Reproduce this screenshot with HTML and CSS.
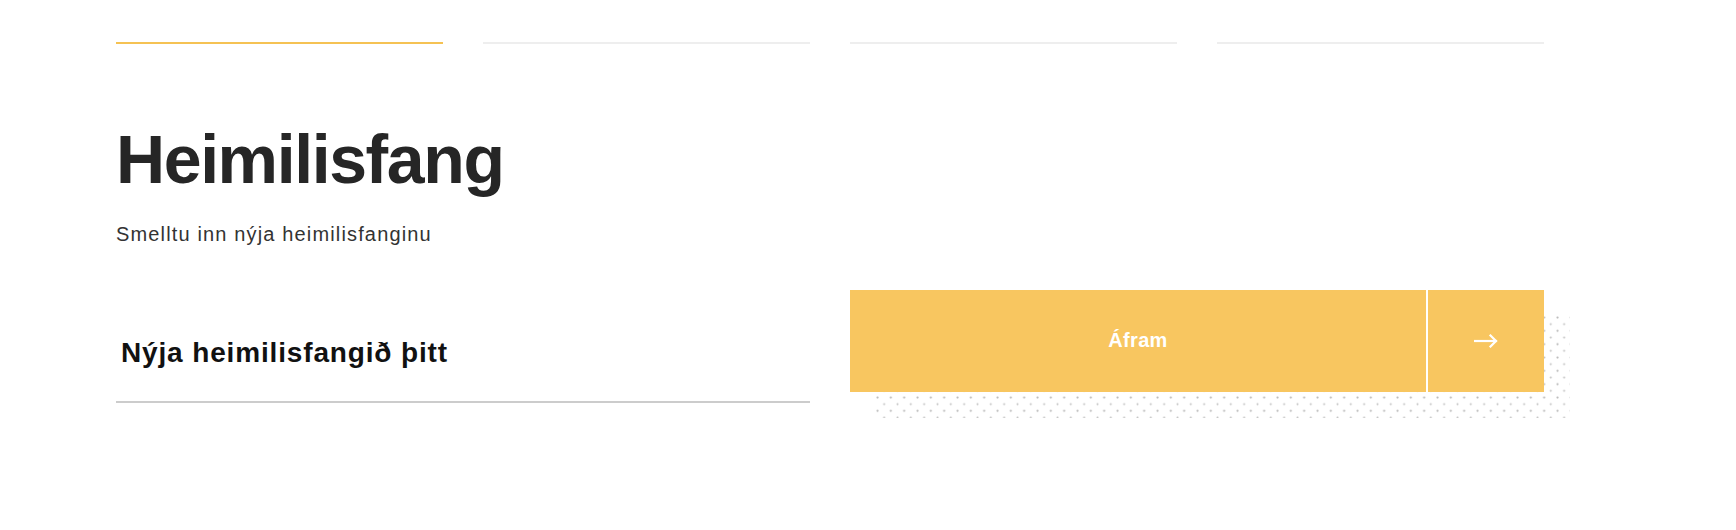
FILE: index.html
```html
<!DOCTYPE html>
<html lang="is">
<head>
<meta charset="utf-8">
<title>Heimilisfang</title>
<link rel="stylesheet" href="styles.css">
</head>
<body>
<main class="page">
  <div class="steps">
    <span class="step step-active"></span>
    <span class="step"></span>
    <span class="step"></span>
    <span class="step"></span>
  </div>
  <h1 class="title">Heimilisfang</h1>
  <p class="subtitle">Smelltu inn nýja heimilisfanginu</p>
  <form class="form-row">
    <div class="field"><span class="field-text">Nýja heimilisfangið þitt</span></div>
    <div class="submit">
      <svg class="submit-dots" width="694" height="102" viewBox="0 0 694 102" aria-hidden="true">
        <defs>
          <pattern id="dots" x="0" y="0" width="13.333" height="13.333" patternUnits="userSpaceOnUse">
            <circle cx="1.5" cy="1.5" r="1.1" fill="#b8b8b8"/>
            <circle cx="8.17" cy="8.17" r="1" fill="#c2c2c2"/>
          </pattern>
        </defs>
        <rect x="0" y="0" width="694" height="102" fill="url(#dots)"/>
      </svg>
      <button type="button" class="submit-main">Áfram</button>
      <button type="button" class="submit-arrow" aria-label="Áfram">
        <svg width="24" height="14" viewBox="0 0 24 14" fill="none" stroke="#fff" stroke-width="2.2" stroke-linecap="square">
          <path d="M1 7 H22"/>
          <path d="M16.5 1.5 L22 7 L16.5 12.5"/>
        </svg>
      </button>
    </div>
  </form>
</main>
</body>
</html>
```
FILE: styles.css
```css
html, body {
  margin: 0;
  padding: 0;
  background: #ffffff;
}

.page {
  width: 1428px;
  padding-left: 116px;
  padding-bottom: 80px;
  font-family: "Liberation Sans", Arial, sans-serif;
  color: #222222;
}

.steps {
  display: grid;
  grid-template-columns: repeat(4, 1fr);
  column-gap: 40px;
  margin-top: 42px;
}

.step {
  display: block;
  height: 2px;
  background: #eeeeee;
}

.step-active {
  background: #f5c253;
}

.title {
  margin: 81px 0 0 0;
  font-size: 68px;
  line-height: 68px;
  font-weight: 700;
  letter-spacing: -1.4px;
  color: #262626;
}

.subtitle {
  margin: 29px 0 0 0;
  font-size: 20px;
  line-height: 24px;
  font-weight: 400;
  letter-spacing: 1.15px;
  color: #333333;
}

.form-row {
  display: grid;
  grid-template-columns: repeat(4, 1fr);
  column-gap: 40px;
  align-items: start;
  margin: 44px 0 0 0;
}

.field {
  grid-column: 1 / 3;
  padding: 47px 0 32px 5px;
  border-bottom: 2px solid #cccccc;
}

.field-text {
  display: block;
  font-size: 28px;
  line-height: 32px;
  font-weight: 700;
  letter-spacing: 0.85px;
  color: #111111;
}

.submit {
  grid-column: 3 / 5;
  position: relative;
  display: flex;
  height: 102px;
}

.submit-dots {
  position: absolute;
  left: 26px;
  top: 26px;
  width: 694px;
  height: 102px;
  overflow: visible;
  display: block;
}

.submit-main,
.submit-arrow {
  position: relative;
  border: 0;
  margin: 0;
  padding: 0;
  background: #f8c660;
  color: #ffffff;
  font-family: "Liberation Sans", Arial, sans-serif;
  cursor: pointer;
}

.submit-main {
  flex: 1;
  font-size: 20px;
  font-weight: 700;
  letter-spacing: 0.3px;
  padding-bottom: 2px;
}

.submit-arrow {
  width: 116px;
  margin-left: 2px;
  display: flex;
  align-items: center;
  justify-content: center;
}

.submit-arrow svg {
  display: block;
}
```
